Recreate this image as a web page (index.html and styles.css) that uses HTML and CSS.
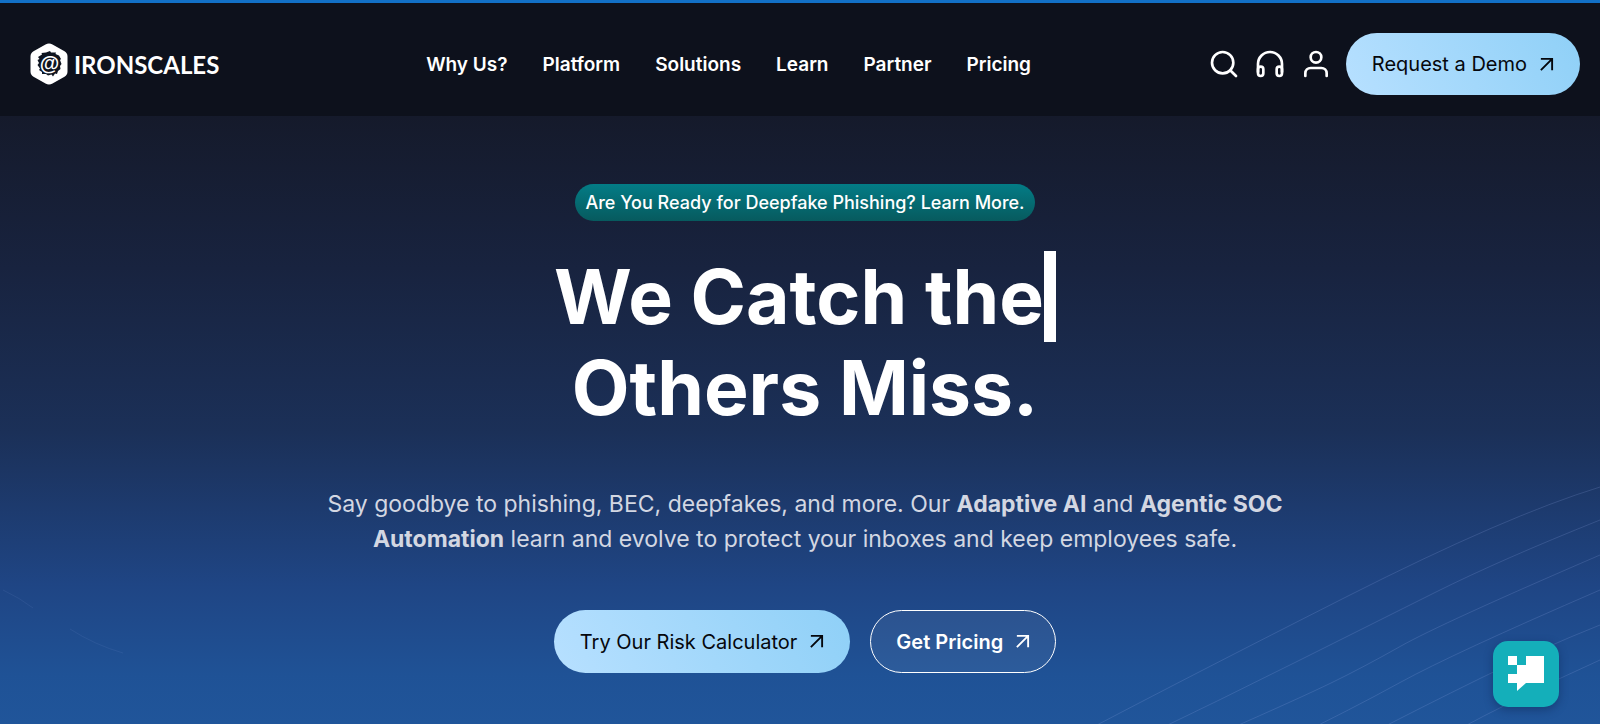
FILE: index.html
```html
<!DOCTYPE html>
<html lang="en">
<head>
<meta charset="utf-8">
<meta name="viewport" content="width=device-width, initial-scale=1">
<title>IRONSCALES</title>
<link rel="stylesheet" href="styles.css">
</head>
<body>
<svg class="sprite" aria-hidden="true">
  <symbol id="arrow" viewBox="0 0 16 16"><path d="M2 2H14V14M14 2L2 14" fill="none" stroke="currentColor" stroke-width="2"/></symbol>
</svg>
<header class="site-header">
  <a class="logo" href="#">
    <svg class="logo-mark" viewBox="0 0 38 42" aria-hidden="true">
      <path d="M15.500 1.500Q19 -.4 22.500 1.500L34.500 8.300Q37.500 10 37.500 13.500V28.500Q37.500 32 34.500 33.700L22.500 40.500Q19 42.400 15.500 40.500L3.500 33.700Q.5 32 .5 28.500V13.500Q.5 10 3.500 8.300Z" fill="#fff"/>
      <path d="M8 14L12 11.500L11.500 10L16 9.500L20 8L21 9.500L26 9.500L25.500 11L29 12.500L31 16L30 17L31.500 21L30 23L30.500 26L28 28L27 31L25 30.500L23 33.500L21.500 31.500L18 32.500L16 31L12 31L12 29L9 27L10 25.500L7.500 22L9 20L7.500 17L9.500 16Z" fill="#0e1420"/>
      <text class="logo-at" x="19.500" y="27" text-anchor="middle">@</text>
    </svg>
    <span class="logo-name">IRONSCALES</span>
  </a>
  <nav class="main-nav">
    <a href="#">Why Us?</a>
    <a href="#">Platform</a>
    <a href="#">Solutions</a>
    <a href="#">Learn</a>
    <a href="#">Partner</a>
    <a href="#">Pricing</a>
  </nav>
  <div class="actions">
    <button class="icon-button" type="button" aria-label="Search"><svg viewBox="0 0 24 24"><circle cx="11" cy="11" r="8"/><path d="M21 21l-4.350-4.350"/></svg></button>
    <a class="icon-button" href="#" aria-label="Support"><svg viewBox="0 0 24 24"><path d="M3 18v-6a9 9 0 0 1 18 0v6"/><path d="M3 16a2 2 0 0 1 2-2h0a2 2 0 0 1 2 2v3a2 2 0 0 1-4 0zM21 16a2 2 0 0 0-2-2h0a2 2 0 0 0-2 2v3a2 2 0 0 0 4 0z"/></svg></a>
    <a class="icon-button" href="#" aria-label="Account"><svg viewBox="0 0 24 24"><path d="M20 21v-2a4 4 0 0 0-4-4H8a4 4 0 0 0-4 4v2"/><circle cx="12" cy="7" r="4"/></svg></a>
    <a class="button button-light" href="#">Request a Demo <svg class="arrow"><use href="#arrow"/></svg></a>
  </div>
</header>
<main class="hero">
  <svg class="hero-lines" viewBox="0 0 1600 608" preserveAspectRatio="xMaxYMax slice" aria-hidden="true">
    <path d="M1076 620Q1190 560 1348 480T1600 371"/>
    <path d="M1145 620Q1220 584 1296 546T1436 476T1600 404"/>
    <path d="M1225 615Q1300 582 1331 567T1401 530T1600 439"/>
    <path d="M1292 622Q1350 594 1401 566T1600 474"/>
    <path d="M1366 620Q1420 592 1481 562T1600 509"/>
    <path d="M1446 620Q1520 580 1600 544"/>
    <path class="faint" d="M3 474Q20 482 33 492M70 513Q95 529 123 537"/>
  </svg>
  <a class="badge" href="#">Are You Ready for Deepfake Phishing? Learn More.</a>
  <h1 class="title"><span class="typed">We Catch the</span><br>Others Miss.</h1>
  <p class="lead">Say goodbye to phishing, BEC, deepfakes, and more. Our <strong>Adaptive AI</strong> and <strong>Agentic SOC Automation</strong> learn and evolve to protect your inboxes and keep employees safe.</p>
  <div class="cta">
    <a class="button button-light" href="#">Try Our Risk Calculator <svg class="arrow"><use href="#arrow"/></svg></a>
    <a class="button button-outline" href="#">Get Pricing <svg class="arrow"><use href="#arrow"/></svg></a>
  </div>
</main>
<button class="chat" type="button" aria-label="Open chat">
  <svg viewBox="0 0 36 36" aria-hidden="true"><path d="M0 0H9V9H18V0H36V27H18L9 35V27H0V18H9V9H0Z" fill="#fff"/></svg>
</button>
</body>
</html>
```
FILE: styles.css
```css
* {
  box-sizing: border-box;
}

body {
  margin: 0;
  min-height: 100vh;
  display: flex;
  flex-direction: column;
  font-family: Inter, "Liberation Sans", sans-serif;
  font-size: 20px;
  color: #fff;
  background: #20559a;
}

a {
  color: inherit;
  text-decoration: none;
}

.sprite {
  display: none;
}

.site-header {
  display: flex;
  align-items: center;
  padding: 30px 20px 21px 30px;
  border-top: 3px solid #1270c6;
  background: #0d111c;
}

.logo {
  display: flex;
  align-items: center;
  gap: 6px;
  margin-right: 30px;
}

.logo-mark {
  width: 38px;
  height: 42px;
}

.logo-at {
  font: bold 20px "Liberation Sans", sans-serif;
  fill: #fff;
}

.logo-name {
  font-family: Lato, sans-serif;
  font-size: 24px;
  font-weight: 700;
}

.main-nav {
  flex: 1;
  display: flex;
  justify-content: center;
  gap: 35px;
  font-size: 19px;
  font-weight: 600;
}

.actions {
  display: flex;
  align-items: center;
  gap: 14px;
}

.icon-button {
  display: flex;
  padding: 0;
  border: 0;
  background: none;
  color: inherit;
}

.icon-button svg {
  width: 32px;
  height: 32px;
  fill: none;
  stroke: currentColor;
  stroke-width: 2;
  stroke-linecap: round;
  stroke-linejoin: round;
}

.button {
  display: flex;
  align-items: center;
  gap: 12px;
  min-height: 62px;
  padding: 0 25px;
  border-radius: 32px;
  white-space: nowrap;
}

.button-light {
  padding: 0 26px;
  color: #05070c;
  background: linear-gradient(60deg, #b7e0ff, #8fd0f7);
}

.button-outline {
  border: 1px solid #fff;
  background: rgba(255, 255, 255, 0.06);
  font-weight: 600;
}

.arrow {
  width: 15px;
  height: 15px;
}

.hero {
  position: relative;
  flex: 1;
  display: flex;
  flex-direction: column;
  align-items: center;
  padding: 68px 0 50px 10px;
  background: linear-gradient(#151a2b 0%, #18233f 25%, #1b3058 52%, #1f4584 77%, #1f5296 92%, #20559a 100%);
}

.hero-lines {
  position: absolute;
  inset: 0;
  width: 100%;
  height: 100%;
  fill: none;
  stroke: rgba(150, 170, 230, 0.2);
  stroke-width: 1;
}

.faint {
  opacity: 0.5;
}

.badge {
  position: relative;
  padding: 0 10px;
  border-radius: 19px;
  font-size: 18px;
  font-weight: 500;
  line-height: 37px;
  background: linear-gradient(#037c86, #075a5e);
}

.title {
  margin: 30px 0 0;
  font-size: 75px;
  font-weight: 700;
  line-height: 91px;
  text-align: center;
}

.typed {
  border-right: 12px solid #fff;
}

.lead {
  width: 980px;
  max-width: 100%;
  margin: 54px 0 0;
  font-size: 23px;
  line-height: 35px;
  text-align: center;
  color: #d3d7e2;
}

.cta {
  position: relative;
  display: flex;
  gap: 20px;
  margin-top: 53px;
}

.cta .button {
  min-height: 63px;
}

.chat {
  position: fixed;
  right: 41px;
  bottom: 17px;
  display: flex;
  align-items: center;
  justify-content: center;
  width: 66px;
  height: 66px;
  padding: 0;
  border: 0;
  border-radius: 15px;
  background: #14afba;
  box-shadow: 0 3px 10px rgba(10, 30, 70, 0.4);
}

.chat svg {
  width: 36px;
  height: 36px;
}
```
